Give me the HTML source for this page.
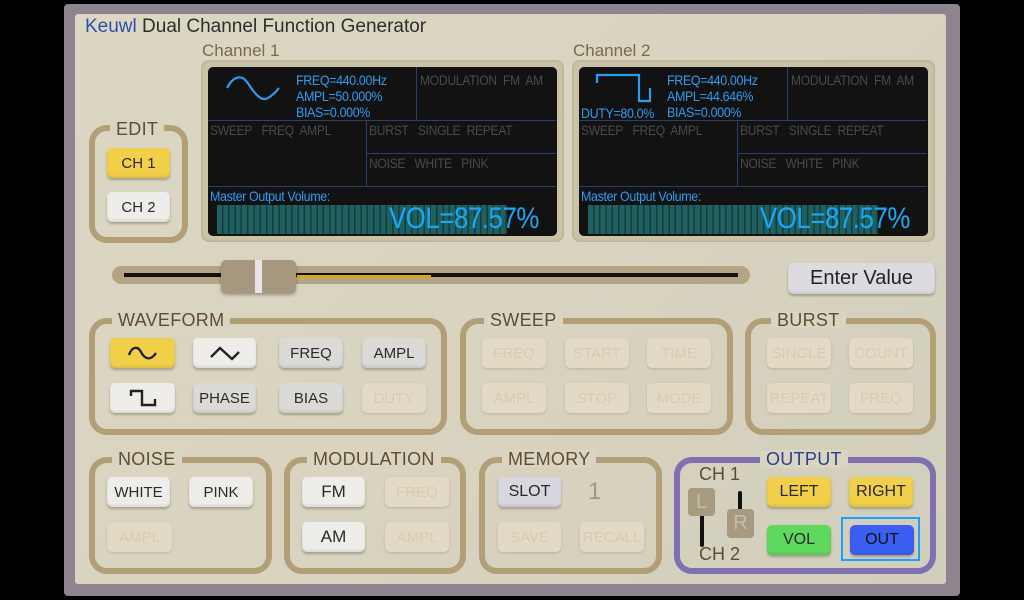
<!DOCTYPE html>
<html><head><meta charset="utf-8"><style>
*{margin:0;padding:0;box-sizing:border-box}
body{width:1024px;height:600px;background:#000;position:relative;overflow:hidden;font-family:"Liberation Sans",sans-serif}
.a{position:absolute}
#frame{left:64px;top:4px;width:896px;height:592px;background:#8e8490;border-radius:4px}
#panel{left:75px;top:14px;width:871px;height:570px;background:linear-gradient(135deg,#dcd7c2,#d8d4c0 50%,#d2cebc);border-radius:3px}
.t{white-space:nowrap;line-height:1}
.bez{background:#cbc3a8;border-radius:8px;box-shadow:inset 0 0 3px #a89a7a}
.scr{background:#121212;border-radius:5px}
.ln{background:#27406e}
.bt{color:#2a9df0;font-size:14px;letter-spacing:-0.4px;transform:scaleX(0.89);transform-origin:0 0}
.gt{color:#4a4a4a;font-size:14px;letter-spacing:-0.3px;transform:scaleX(0.86);transform-origin:0 0}
.bar{background:repeating-linear-gradient(90deg,#206060 0,#206060 4.8px,#143c3c 4.8px,#143c3c 6.3px)}
.vol{color:#19a8f5;font-size:30px;letter-spacing:-0.5px;transform:scaleX(0.86);transform-origin:0 0}
.grp{border:6px solid #b29f77;border-radius:18px}
.lab{font-size:18px;color:#5f4d30;background:#d9d5c1;padding:0 6px;letter-spacing:0.3px}
.b{position:absolute;width:64px;height:30px;border-radius:5px;background:#dcdad6;box-shadow:0 2px 2px rgba(120,110,90,.5),inset 0 -2px 2px rgba(0,0,0,.08);display:flex;align-items:center;justify-content:center;font-size:15px;color:#2a2a2a}
.w{background:#eeede9}
.y{background:#f2cf48}
.d{background:#e2dac4;color:#d7ccb2;box-shadow:0 1px 2px rgba(150,130,100,.4)}
</style></head><body>
<div class="a" id="frame"></div>
<div class="a" id="panel"></div>
<div class="a t" style="left:85px;top:17px;font-size:19px;color:#2d2d2d"><span style="color:#2c50b0">Keuwl</span> Dual Channel Function Generator</div>
<div class="a t" style="left:202px;top:42px;font-size:17px;color:#7a6a4c">Channel 1</div>
<div class="a t" style="left:573px;top:42px;font-size:17px;color:#7a6a4c">Channel 2</div>

<!-- CH1 display -->
<div class="a bez" style="left:201px;top:60px;width:363px;height:182px"></div>
<div class="a scr" style="left:208px;top:67px;width:349px;height:169px"></div>
<div class="a ln" style="left:416px;top:67px;width:1px;height:53px"></div>
<div class="a ln" style="left:208px;top:120px;width:348px;height:1px"></div>
<div class="a ln" style="left:366px;top:120px;width:1px;height:66px"></div>
<div class="a ln" style="left:366px;top:153px;width:190px;height:1px"></div>
<div class="a ln" style="left:208px;top:186px;width:348px;height:1px"></div>
<svg class="a" style="left:224px;top:73px" width="58" height="30"><path d="M3 15 C10 2,18 2,23 9 S 36 30,44 25 S 52 18,55 15" fill="none" stroke="#2a9df0" stroke-width="2.2"/></svg>
<div class="a t bt" style="left:296px;top:73px">FREQ=440.00Hz</div>
<div class="a t bt" style="left:296px;top:89px">AMPL=50.000%</div>
<div class="a t bt" style="left:296px;top:105px">BIAS=0.000%</div>
<div class="a t gt" style="left:420px;top:73px">MODULATION&nbsp; FM&nbsp; AM</div>
<div class="a t gt" style="left:210px;top:123px">SWEEP&nbsp;&nbsp; FREQ&nbsp; AMPL</div>
<div class="a t gt" style="left:369px;top:123px">BURST&nbsp;&nbsp; SINGLE&nbsp; REPEAT</div>
<div class="a t gt" style="left:369px;top:156px">NOISE&nbsp;&nbsp; WHITE&nbsp;&nbsp; PINK</div>
<div class="a t bt" style="left:210px;top:189px">Master Output Volume:</div>
<div class="a bar" style="left:217px;top:205px;width:290px;height:29px"></div>
<div class="a t vol" style="left:389px;top:204px">VOL=87.57%</div>

<!-- CH2 display -->
<div class="a bez" style="left:572px;top:60px;width:363px;height:182px"></div>
<div class="a scr" style="left:579px;top:67px;width:349px;height:169px"></div>
<div class="a ln" style="left:787px;top:67px;width:1px;height:53px"></div>
<div class="a ln" style="left:579px;top:120px;width:348px;height:1px"></div>
<div class="a ln" style="left:737px;top:120px;width:1px;height:66px"></div>
<div class="a ln" style="left:737px;top:153px;width:190px;height:1px"></div>
<div class="a ln" style="left:579px;top:186px;width:348px;height:1px"></div>
<svg class="a" style="left:594px;top:72px" width="60" height="34"><path d="M3 11 V3 H45 V29 H56 V16" fill="none" stroke="#2a9df0" stroke-width="2.2"/></svg>
<div class="a t bt" style="left:581px;top:106px">DUTY=80.0%</div>
<div class="a t bt" style="left:667px;top:73px">FREQ=440.00Hz</div>
<div class="a t bt" style="left:667px;top:89px">AMPL=44.646%</div>
<div class="a t bt" style="left:667px;top:105px">BIAS=0.000%</div>
<div class="a t gt" style="left:791px;top:73px">MODULATION&nbsp; FM&nbsp; AM</div>
<div class="a t gt" style="left:581px;top:123px">SWEEP&nbsp;&nbsp; FREQ&nbsp; AMPL</div>
<div class="a t gt" style="left:740px;top:123px">BURST&nbsp;&nbsp; SINGLE&nbsp; REPEAT</div>
<div class="a t gt" style="left:740px;top:156px">NOISE&nbsp;&nbsp; WHITE&nbsp;&nbsp; PINK</div>
<div class="a t bt" style="left:581px;top:189px">Master Output Volume:</div>
<div class="a bar" style="left:588px;top:205px;width:290px;height:29px"></div>
<div class="a t vol" style="left:760px;top:204px">VOL=87.57%</div>

<!-- EDIT -->
<div class="a grp" style="left:89px;top:125px;width:99px;height:118px"></div>
<div class="a t lab" style="left:110px;top:120px">EDIT</div>
<div class="b y" style="left:107px;top:148px;width:63px">CH 1</div>
<div class="b w" style="left:107px;top:192px;width:63px">CH 2</div>

<!-- slider -->
<div class="a" style="left:112px;top:266px;width:638px;height:18px;background:#b4a483;border-radius:9px"></div>
<div class="a" style="left:124px;top:273px;width:614px;height:4px;background:#111"></div>
<div class="a" style="left:297px;top:275px;width:134px;height:3px;background:#d4a820"></div>
<div class="a" style="left:221px;top:260px;width:75px;height:33px;background:#a6977e;border-radius:5px;box-shadow:0 2px 3px rgba(0,0,0,.3)"></div>
<div class="a" style="left:255px;top:260px;width:7px;height:33px;background:#e8e4ea"></div>
<div class="b" style="left:788px;top:263px;width:147px;height:31px;background:#dddbe0;font-size:20px;color:#222">Enter Value</div>

<!-- WAVEFORM -->
<div class="a grp" style="left:89px;top:318px;width:358px;height:117px"></div>
<div class="a t lab" style="left:112px;top:311px">WAVEFORM</div>
<div class="b y" style="left:110px;top:338px;width:65px"><svg width="34" height="20"><path d="M3 12 C6 3,12 3,15 9 S24 19,30 10" fill="none" stroke="#222" stroke-width="2.4"/></svg></div>
<div class="b w" style="left:193px;top:338px;width:63px"><svg width="34" height="20"><path d="M3 14 L12 5 L24 16 L31 9" fill="none" stroke="#222" stroke-width="2.4"/></svg></div>
<div class="b" style="left:279px;top:338px">FREQ</div>
<div class="b" style="left:362px;top:338px">AMPL</div>
<div class="b w" style="left:110px;top:383px;width:65px"><svg width="34" height="20"><path d="M5 8 V3 H16 V17 H29 V11" fill="none" stroke="#222" stroke-width="2.4"/></svg></div>
<div class="b" style="left:193px;top:383px;width:63px">PHASE</div>
<div class="b" style="left:279px;top:383px">BIAS</div>
<div class="b d" style="left:362px;top:383px">DUTY</div>

<!-- SWEEP -->
<div class="a grp" style="left:460px;top:318px;width:273px;height:117px"></div>
<div class="a t lab" style="left:484px;top:311px">SWEEP</div>
<div class="b d" style="left:482px;top:338px">FREQ</div>
<div class="b d" style="left:565px;top:338px">START</div>
<div class="b d" style="left:647px;top:338px">TIME</div>
<div class="b d" style="left:482px;top:383px">AMPL</div>
<div class="b d" style="left:565px;top:383px">STOP</div>
<div class="b d" style="left:647px;top:383px">MODE</div>

<!-- BURST -->
<div class="a grp" style="left:745px;top:318px;width:191px;height:117px"></div>
<div class="a t lab" style="left:771px;top:311px">BURST</div>
<div class="b d" style="left:767px;top:338px">SINGLE</div>
<div class="b d" style="left:849px;top:338px">COUNT</div>
<div class="b d" style="left:767px;top:383px">REPEAT</div>
<div class="b d" style="left:849px;top:383px">FREQ</div>

<!-- NOISE -->
<div class="a grp" style="left:89px;top:457px;width:183px;height:117px"></div>
<div class="a t lab" style="left:112px;top:450px">NOISE</div>
<div class="b w" style="left:107px;top:477px;width:63px">WHITE</div>
<div class="b w" style="left:189px;top:477px;width:64px">PINK</div>
<div class="b d" style="left:107px;top:522px;width:65px">AMPL</div>

<!-- MODULATION -->
<div class="a grp" style="left:284px;top:457px;width:182px;height:117px"></div>
<div class="a t lab" style="left:307px;top:450px">MODULATION</div>
<div class="b w" style="left:302px;top:477px;width:63px;font-size:17px">FM</div>
<div class="b d" style="left:385px;top:477px">FREQ</div>
<div class="b w" style="left:302px;top:522px;width:63px;font-size:17px">AM</div>
<div class="b d" style="left:385px;top:522px">AMPL</div>

<!-- MEMORY -->
<div class="a grp" style="left:479px;top:457px;width:183px;height:117px"></div>
<div class="a t lab" style="left:502px;top:450px">MEMORY</div>
<div class="b" style="left:498px;top:477px;width:63px;background:#d8d6de;font-size:16px">SLOT</div>
<div class="a t" style="left:588px;top:480px;font-size:24px;color:#a8987a">1</div>
<div class="b d" style="left:498px;top:522px;width:63px">SAVE</div>
<div class="b d" style="left:580px;top:522px">RECALL</div>

<!-- OUTPUT -->
<div class="a grp" style="left:674px;top:457px;width:262px;height:117px;border-color:#8070b0"></div>
<div class="a t lab" style="left:760px;top:450px;color:#2e3e88">OUTPUT</div>
<div class="a t" style="left:699px;top:465px;font-size:18px;color:#5f4d30">CH 1</div>
<div class="a t" style="left:699px;top:545px;font-size:18px;color:#5f4d30">CH 2</div>
<div class="a" style="left:700px;top:505px;width:4px;height:42px;background:#111;border-radius:2px"></div>
<div class="a" style="left:688px;top:488px;width:27px;height:28px;background:#a69a80;border-radius:4px;color:#c8bea8;font-size:20px;text-align:center;line-height:28px">L</div>
<div class="a" style="left:738px;top:491px;width:4px;height:40px;background:#111;border-radius:2px"></div>
<div class="a" style="left:727px;top:509px;width:27px;height:29px;background:#a69a80;border-radius:4px;color:#c8bea8;font-size:20px;text-align:center;line-height:29px">R</div>
<div class="b y" style="left:767px;top:477px;font-size:16px">LEFT</div>
<div class="b y" style="left:849px;top:477px;font-size:16px">RIGHT</div>
<div class="b" style="left:767px;top:525px;background:#5ed85e;font-size:16px">VOL</div>
<div class="a" style="left:841px;top:517px;width:79px;height:44px;border:2px solid #1aa0ff"></div>
<div class="b" style="left:850px;top:525px;background:#3a5ef2;font-size:16px;color:#111">OUT</div>
</body></html>
